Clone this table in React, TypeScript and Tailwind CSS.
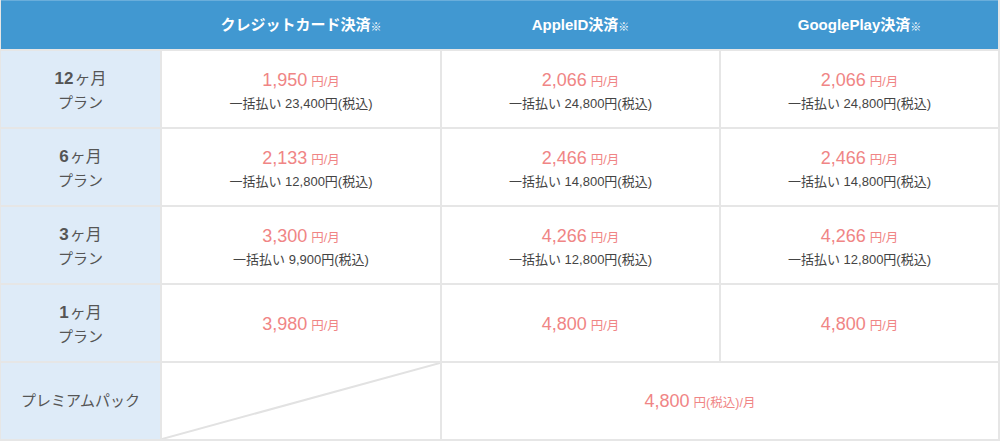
// Price table: payment method columns × plan rows

const jp = "font-['Helvetica_Neue','Liberation_Sans','Noto_Sans_CJK_JP',sans-serif]";

type Cell = { price: string; total?: string };

const rows: { months: string; cells: Cell[] }[] = [
  {
    months: "12",
    cells: [
      { price: "1,950", total: "23,400円(税込)" },
      { price: "2,066", total: "24,800円(税込)" },
      { price: "2,066", total: "24,800円(税込)" },
    ],
  },
  {
    months: "6",
    cells: [
      { price: "2,133", total: "12,800円(税込)" },
      { price: "2,466", total: "14,800円(税込)" },
      { price: "2,466", total: "14,800円(税込)" },
    ],
  },
  {
    months: "3",
    cells: [
      { price: "3,300", total: "9,900円(税込)" },
      { price: "4,266", total: "12,800円(税込)" },
      { price: "4,266", total: "12,800円(税込)" },
    ],
  },
  {
    months: "1",
    cells: [{ price: "3,980" }, { price: "4,800" }, { price: "4,800" }],
  },
];

const Price = ({ value, unit }: { value: string; unit: string }) => (
  <div className="flex items-baseline text-[#f08585] leading-none">
    <span className="text-[18px]">{value}</span>
    <span className="ml-[4px] text-[12.5px]">{unit}</span>
  </div>
);

const HeaderLabel = ({ text }: { text: string }) => (
  <div className="flex items-center justify-center text-white font-bold text-[15px]">
    {text}
    <span className="text-[11px] font-black mt-[4px]">※</span>
  </div>
);

export default function App() {
  return (
    <div className={`w-[1000px] h-[441px] bg-white ${jp}`}>
      <div className="grid grid-cols-[159px_278px_277px_277px] grid-rows-[49px_76px_76px_76px_76px_76px] gap-[2px] bg-[#e6e6e6] pl-[1px] pr-[2px] pb-[2px]">
        {/* header */}
        <div className="col-span-4 grid grid-cols-[159px_278px_277px_277px] gap-[2px] bg-[#4198d1] border-t border-[#6aaedb]">
          <div />
          <HeaderLabel text="クレジットカード決済" />
          <HeaderLabel text="AppleID決済" />
          <HeaderLabel text="GooglePlay決済" />
        </div>

        {rows.map((r) => (
          <div key={r.months} className="contents">
            <div className="bg-[#deebf8] flex flex-col items-center justify-center text-[#555] pt-[2px]">
              <div className="flex items-baseline leading-none">
                <span className="font-bold text-[17px]">{r.months}</span>
                <span className="text-[16px] ml-[1px]">ヶ月</span>
              </div>
              <div className="text-[15px] leading-none mt-[8px]">プラン</div>
            </div>
            {r.cells.map((c, i) => (
              <div key={i} className="bg-white flex flex-col items-center justify-center pt-[2px]">
                <Price value={c.price} unit="円/月" />
                {c.total && (
                  <div className="text-[13px] text-[#444] leading-none mt-[8px]">
                    一括払い {c.total}
                  </div>
                )}
              </div>
            ))}
          </div>
        ))}

        {/* premium pack */}
        <div className="bg-[#deebf8] flex items-center justify-center text-[#555] text-[15px]">
          プレミアムパック
        </div>
        <div className="bg-white relative">
          <svg className="absolute inset-0" width="278" height="76" viewBox="0 0 278 76">
            <line x1="0" y1="76" x2="278" y2="0" stroke="#e2e2e2" strokeWidth="2" />
          </svg>
        </div>
        <div className="col-span-2 bg-white flex items-center justify-center pr-[40px]">
          <Price value="4,800" unit="円(税込)/月" />
        </div>
      </div>
    </div>
  );
}
